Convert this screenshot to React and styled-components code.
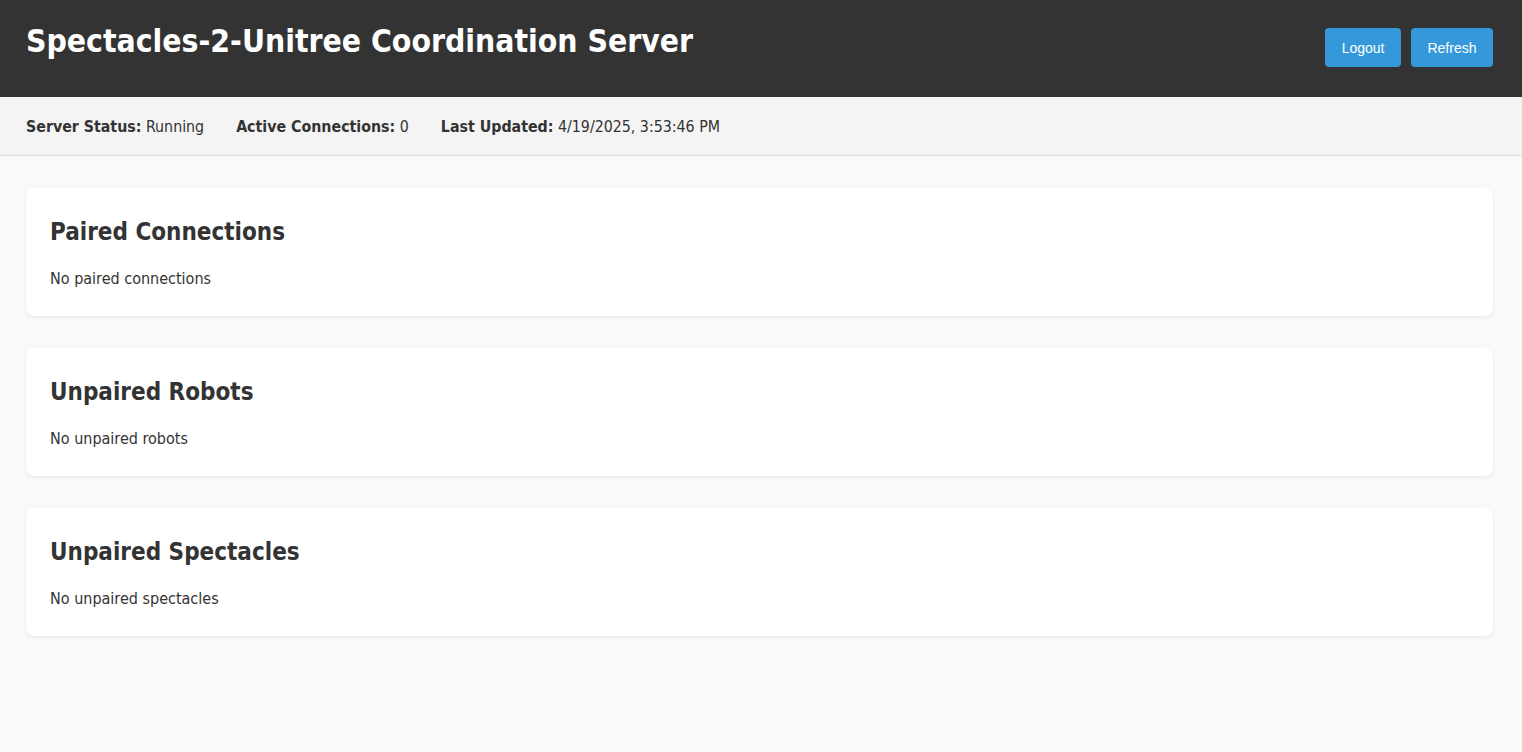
import React from 'react';
import styled, { createGlobalStyle } from 'styled-components';

const GlobalStyle = createGlobalStyle`
  html, body {
    margin: 0;
    padding: 0;
    background-color: #f9f9f9;
    color: #333333;
    font-family: "DejaVu Sans Condensed", "DejaVu Sans", sans-serif;
  }
`;

const Header = styled.header`
  background-color: #333333;
  color: #ffffff;
  height: 97px;
  box-sizing: border-box;
  padding: 0 29px 0 26px;
  display: flex;
  justify-content: space-between;
  align-items: flex-start;
`;

const Title = styled.h1`
  margin: 0;
  padding-top: 22px;
  font-size: 31.6px;
  line-height: 38px;
  font-weight: bold;
`;

const Actions = styled.div`
  display: flex;
  gap: 10px;
  padding-top: 28px;
`;

const Button = styled.button`
  height: 39px;
  padding: 0 16.5px;
  border: none;
  border-radius: 4px;
  background-color: #3498db;
  color: #ffffff;
  font-family: "Liberation Sans", Arial, sans-serif;
  font-size: 14px;
  cursor: pointer;

  &:hover {
    opacity: 0.9;
  }
`;

const StatusBar = styled.div`
  background-color: #f4f4f4;
  border-bottom: 1px solid #dddddd;
  height: 59px;
  box-sizing: border-box;
  padding: 0 26px;
  display: flex;
  align-items: center;
  gap: 32px;
  font-size: 15.8px;
`;

const StatusItem = styled.div`
  white-space: nowrap;

  strong {
    font-weight: bold;
  }
`;

const Main = styled.main`
  padding: 32px 29px 32px 26px;
  display: flex;
  flex-direction: column;
  gap: 32px;
`;

const Card = styled.section`
  background-color: #ffffff;
  border-radius: 8px;
  box-shadow: 0 2px 4px rgba(0, 0, 0, 0.06);
  padding: 24px;
  height: 128px;
  box-sizing: border-box;
`;

const CardTitle = styled.h2`
  margin: 6px 0 22px;
  font-size: 24px;
  line-height: 29px;
  font-weight: bold;
`;

const EmptyText = styled.p`
  margin: 0;
  font-size: 16px;
  line-height: 19px;
`;

const sections = [
  { title: 'Paired Connections', empty: 'No paired connections' },
  { title: 'Unpaired Robots', empty: 'No unpaired robots' },
  { title: 'Unpaired Spectacles', empty: 'No unpaired spectacles' },
];

const App = () => {
  return (
    <>
      <GlobalStyle />
      <Header>
        <Title>Spectacles-2-Unitree Coordination Server</Title>
        <Actions>
          <Button>Logout</Button>
          <Button>Refresh</Button>
        </Actions>
      </Header>
      <StatusBar>
        <StatusItem><strong>Server Status:</strong> Running</StatusItem>
        <StatusItem><strong>Active Connections:</strong> 0</StatusItem>
        <StatusItem><strong>Last Updated:</strong> 4/19/2025, 3:53:46 PM</StatusItem>
      </StatusBar>
      <Main>
        {sections.map((s) => (
          <Card key={s.title}>
            <CardTitle>{s.title}</CardTitle>
            <EmptyText>{s.empty}</EmptyText>
          </Card>
        ))}
      </Main>
    </>
  );
};

export default App;
